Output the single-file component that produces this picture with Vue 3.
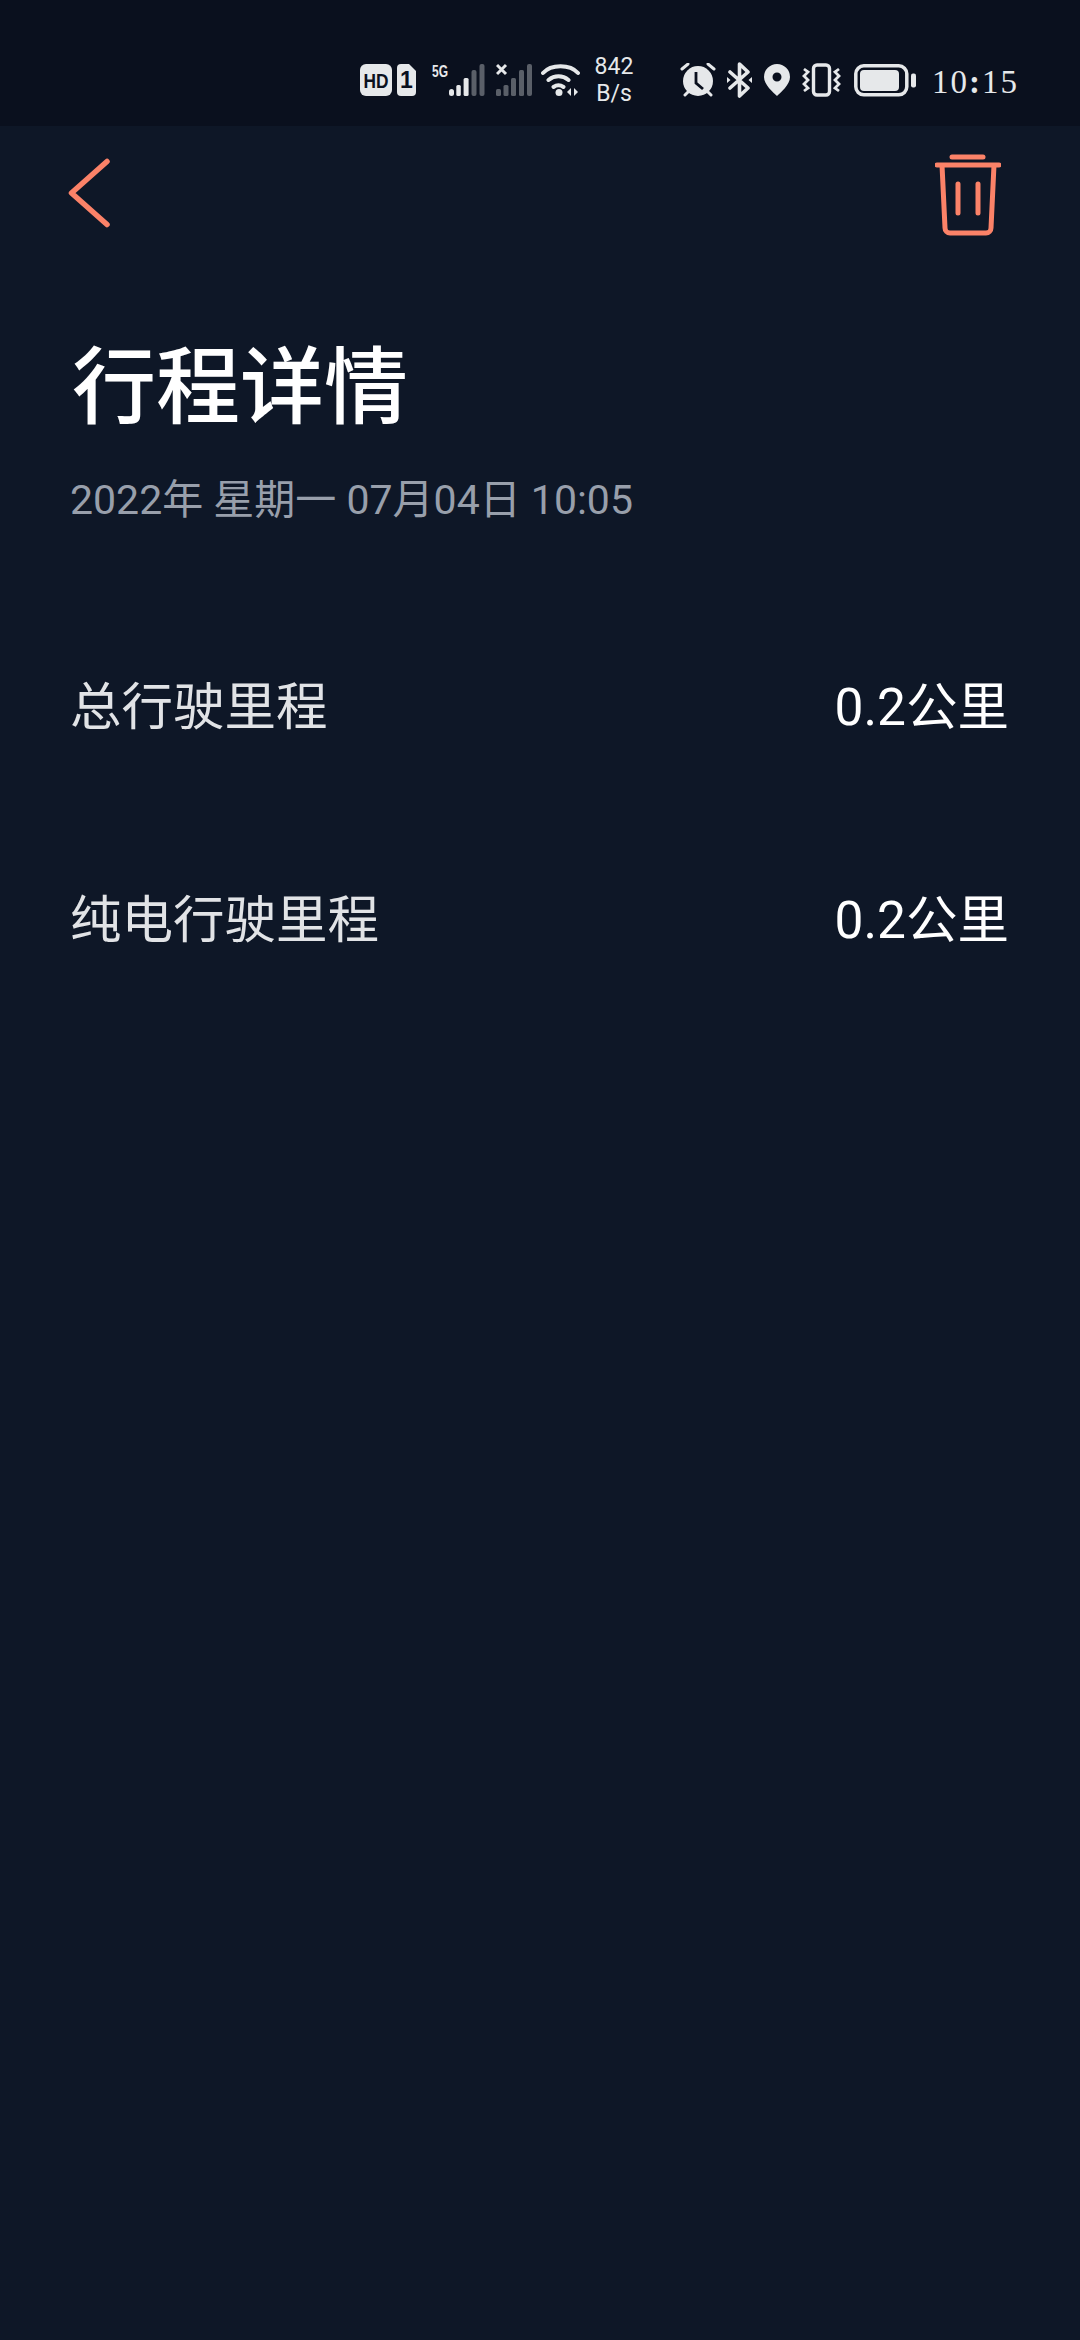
<template>
  <div class="page">
    <div class="status">
      <svg class="ic" width="58" height="34" viewBox="0 0 58 34">
        <rect x="0" y="1" width="32" height="32" rx="6" fill="#e6e8ea" />
        <text x="3.500" y="24.500" textLength="25" lengthAdjust="spacingAndGlyphs" class="hd">HD</text>
        <path d="M41 1h8l7 7v21a4 4 0 0 1-4 4H41a4 4 0 0 1-4-4V5a4 4 0 0 1 4-4z" fill="#e6e8ea" />
        <text x="46.500" y="25" text-anchor="middle" class="sim">1</text>
      </svg>
      <svg class="ic sig1" width="53" height="34" viewBox="0 0 53 34">
        <text x="0" y="14" textLength="16" lengthAdjust="spacingAndGlyphs" class="fiveg">5G</text>
        <rect x="17" y="26" width="5" height="7" rx="2.500" fill="#e6e8ea" />
        <rect x="24.300" y="22" width="4.500" height="11" rx="1.500" fill="#e6e8ea" />
        <rect x="31.600" y="15" width="5" height="18" rx="1.500" fill="#e6e8ea" />
        <rect x="39.500" y="7" width="5" height="26" rx="2" fill="#5a5f68" />
        <rect x="47.500" y="1" width="5" height="32" rx="2" fill="#5a5f68" />
      </svg>
      <svg class="ic sig2" width="36" height="34" viewBox="0 0 36 34">
        <path d="M1 2l9 9M10 2l-9 9" stroke="#e6e8ea" stroke-width="3" fill="none" />
        <rect x="0" y="26" width="5" height="7" rx="1.500" fill="#5a5f68" />
        <rect x="7.500" y="22" width="5" height="11" rx="1.500" fill="#5a5f68" />
        <rect x="15" y="15" width="5" height="18" rx="1.500" fill="#5a5f68" />
        <rect x="23" y="7" width="5" height="26" rx="1.500" fill="#5a5f68" />
        <rect x="31" y="1" width="5" height="32" rx="2" fill="#5a5f68" />
      </svg>
      <svg class="ic wifi" width="39" height="34" viewBox="0 0 39 34">
        <path d="M2 10C10 1 29 1 37 10M7.500 17c6-5 14-5 20 0M12.500 24c3-2 7-2 10 0" stroke="#e6e8ea" stroke-width="4" fill="none" stroke-linecap="round" />
        <circle cx="18" cy="29.500" r="3.500" fill="#e6e8ea" />
        <path d="M30 25v8l-4-4zM33 25v8l4-4z" fill="#e6e8ea" />
      </svg>
      <div class="speed"><span>842</span><span>B/s</span></div>

      <svg class="ic alarm" width="36" height="34" viewBox="0 0 36 34">
        <circle cx="18" cy="18" r="15" fill="#e6e8ea" />
        <path d="M2 6l6-5M34 6l-6-5" stroke="#e6e8ea" stroke-width="3" stroke-linecap="round" />
        <path d="M5 32l3-3M31 32l-3-3" stroke="#e6e8ea" stroke-width="3" stroke-linecap="round" />
        <path d="M16 9v11l7 6" stroke="#0a101e" stroke-width="2.800" fill="none" />
      </svg>
      <svg class="ic bt" width="25" height="36" viewBox="0 0 25 36">
        <path d="M3 10l18 16-8.500 8V2L21 10 3 26" stroke="#e6e8ea" stroke-width="3.600" fill="none" stroke-linejoin="round" stroke-linecap="round" />
        <path d="M0 15l3.500 3-3.500 3zM25 15l-3.500 3 3.500 3z" fill="#e6e8ea" />
      </svg>
      <svg class="ic loc" width="26" height="32" viewBox="0 0 26 32">
        <path fill-rule="evenodd" d="M13 0a13 13 0 0 1 13 13C26 21 16.500 28.500 13 32 9.500 28.500 0 21 0 13A13 13 0 0 1 13 0zm0 8.500a4.500 4.500 0 1 0 0 9 4.500 4.500 0 0 0 0-9z" fill="#e6e8ea" />
      </svg>
      <svg class="ic vib" width="39" height="34" viewBox="0 0 39 34">
        <rect x="11.500" y="2" width="16" height="30" rx="3.500" stroke="#e6e8ea" stroke-width="3.400" fill="none" />
        <path d="M2 6l4 3-4 4 4 4-4 4 4 4-4 3M37 6l-4 3 4 4-4 4 4 4-4 4 4 3" stroke="#e6e8ea" stroke-width="2.800" fill="none" />
      </svg>
      <svg class="ic batt" width="62" height="34" viewBox="0 0 62 34">
        <rect x="1.800" y="2.800" width="51" height="29" rx="8" stroke="#e6e8ea" stroke-width="3.500" fill="none" />
        <rect x="6" y="7" width="39" height="21" rx="4" fill="#e6e8ea" />
        <rect x="57" y="10.500" width="5" height="14" rx="2" fill="#e6e8ea" />
      </svg>
      <span class="clock">10<span class="colon">:</span>15</span>
    </div>

    <div class="topbar">
      <svg class="back" width="44" height="70" viewBox="0 0 44 70">
        <path d="M39 3.500L3.500 35 39 66.500" stroke="#fb8268" stroke-width="5.500" fill="none" stroke-linecap="round" stroke-linejoin="round" />
      </svg>
      <svg class="trash" width="66" height="82" viewBox="0 0 66 82">
        <path d="M17 3h31" stroke="#fb8268" stroke-width="5" stroke-linecap="round" />
        <path d="M2 11h62" stroke="#fb8268" stroke-width="5" stroke-linecap="round" />
        <path d="M7 11l3 63a5 5 0 0 0 5 5h36a5 5 0 0 0 5-5l3-63" stroke="#fb8268" stroke-width="5" fill="none" />
        <path d="M23 30v29M43 30v29" stroke="#fb8268" stroke-width="5" stroke-linecap="round" />
      </svg>
    </div>

    <h1 class="title">行程详情</h1>
    <div class="date">2022年 星期一 07月04日 10:05</div>

    <div class="rows">
      <div v-for="row in rows" :key="row.label" class="row">
        <span class="label">{{ row.label }}</span>
        <span class="value">{{ row.value }}</span>
      </div>
    </div>
  </div>
</template>

<script setup>
const rows = [
  { label: '总行驶里程', value: '0.2公里' },
  { label: '纯电行驶里程', value: '0.2公里' }
]
</script>

<style>
html,
body {
  margin: 0;
  background: #0e1727;
}
</style>

<style scoped>
.page {
  width: 1080px;
  height: 2340px;
  background: #0e1727;
  font-family: Roboto, "Noto Sans CJK SC", sans-serif;
  overflow: hidden;
}

.status {
  height: 126px;
  box-sizing: border-box;
  background: #0a101e;
  display: flex;
  align-items: center;
  padding: 34px 0 0 360px;
}

.ic {
  display: block;
  flex: none;
}

.sig1 {
  margin-left: 14px;
}

.sig2 {
  margin-left: 11px;
}

.wifi {
  margin-left: 9px;
}

.alarm {
  margin-left: 46px;
}

.bt {
  margin-left: 11px;
}

.loc {
  margin-left: 12px;
}

.vib {
  margin-left: 12px;
}

.batt {
  margin-left: 13px;
}

.hd {
  font: 700 21px "Liberation Sans", sans-serif;
  fill: #0a101e;
}

.sim {
  font: 700 23px "Liberation Sans", sans-serif;
  fill: #0a101e;
}

.fiveg {
  font: 700 16px "Liberation Sans", sans-serif;
  fill: #e6e8ea;
}

.speed {
  width: 40px;
  display: flex;
  flex-direction: column;
  align-items: center;
  margin-left: 14px;
  font-size: 23px;
  line-height: 27px;
  color: #e6e8ea;
}

.clock {
  margin-left: 16px;
  font: 33px "Liberation Serif", serif;
  letter-spacing: 2px;
  color: #e6e8ea;
  position: relative;
  top: 2px;
}

.colon {
  font-weight: 700;
}

.topbar {
  display: flex;
  justify-content: space-between;
  align-items: flex-start;
  padding: 28px 79px 0 68px;
}

.back {
  margin-top: 4px;
}

.title {
  margin: 98px 0 0 72px;
  font-size: 84px;
  line-height: 110px;
  font-weight: 500;
  color: #fff;
}

.date {
  margin: 30px 0 0 70px;
  font-size: 41px;
  line-height: 52px;
  color: #989fab;
}

.rows {
  margin-top: 144px;
  padding: 0 71px 0 70px;
  display: flex;
  flex-direction: column;
  gap: 149px;
}

.row {
  display: flex;
  justify-content: space-between;
  align-items: center;
  height: 64px;
}

.label {
  font-size: 51.500px;
  color: #e1e3e6;
}

.value {
  font-size: 51.500px;
  color: #fff;
}
</style>
